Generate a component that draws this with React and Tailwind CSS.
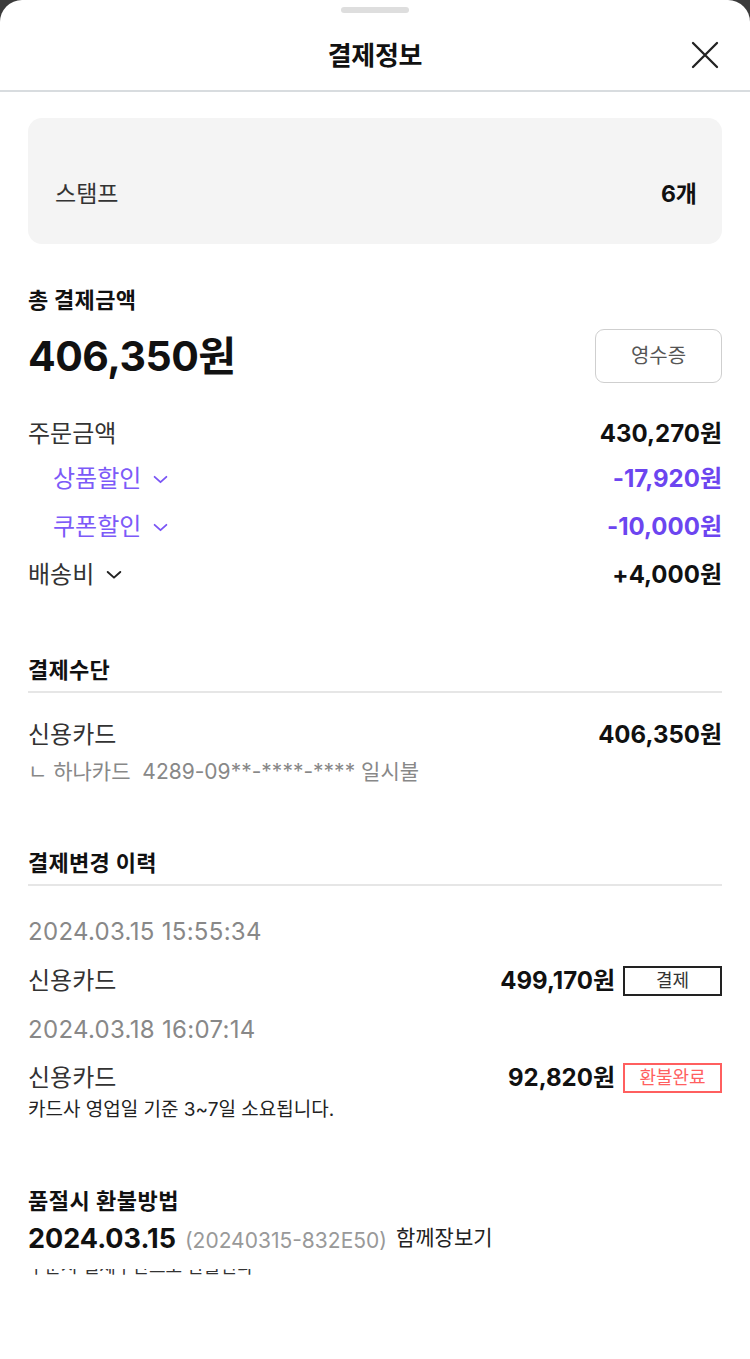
import React from "react";

const font = { fontFamily: 'Inter, "Noto Sans CJK KR", "Noto Sans", sans-serif' };

function Chevron({ color = "#7a55f5", w = 15 }) {
  return (
    <svg width={w} height={w * 0.6} viewBox="0 0 14 8" fill="none" className="shrink-0">
      <path d="M1.5 1.5 L7 6.5 L12.5 1.5" stroke={color} strokeWidth="1.7" strokeLinecap="round" strokeLinejoin="round" />
    </svg>
  );
}

function Row({ left, right, className = "" }) {
  return (
    <div className={"flex items-center justify-between h-[30px] leading-[30px] " + className}>
      {left}
      {right}
    </div>
  );
}

export default function App() {
  return (
    <div className="w-[750px] h-[1359px] bg-[#3b3b3b] overflow-hidden" style={font}>
      <div className="w-full h-full bg-white rounded-t-[22px] flex flex-col">
        {/* handle */}
        <div className="pt-[7px]">
          <div className="mx-auto w-[68px] h-[6px] rounded-full bg-[#dedede]" />
        </div>
        {/* header */}
        <div className="relative h-[79px] pt-[8px] flex items-center justify-center border-b-2 border-[#d8dcdf]">
          <span className="text-[26px] font-bold text-[#111] tracking-[-0.3px] leading-[34px]">결제정보</span>
          <svg className="absolute right-[31px] top-[28px]" width="28" height="28" viewBox="0 0 28 28" fill="none">
            <path d="M2 2 L26 26 M26 2 L2 26" stroke="#222" strokeWidth="2.3" strokeLinecap="round" />
          </svg>
        </div>

        <div className="px-[28px] flex flex-col">
          {/* stamp card */}
          <div className="mt-[26px] h-[126px] rounded-[14px] bg-[#f4f4f4] flex items-end justify-between pl-[27px] pr-[25px] pb-[36px]">
            <span className="text-[23px] text-[#333] leading-[28px]">스탬프</span>
            <span className="text-[23px] font-bold text-[#111] leading-[28px]">6개</span>
          </div>

          {/* total */}
          <div className="mt-[42px] text-[22px] font-bold text-[#111] leading-[28px] tracking-[0.3px]">총 결제금액</div>
          <div className="mt-[15px] flex items-center justify-between">
            <span className="text-[41px] font-bold text-[#111] tracking-[-0.5px] leading-[46px]">406,350원</span>
            <button className="w-[127px] h-[54px] rounded-[9px] border border-[#cfcfcf] text-[20px] text-[#555] bg-white">영수증</button>
          </div>

          <Row
            className="mt-[36px]"
            left={<span className="text-[24px] text-[#333]">주문금액</span>}
            right={<span className="text-[24px] font-bold text-[#111]">430,270원</span>}
          />
          <Row
            className="mt-[15px]"
            left={
              <span className="flex items-center gap-[12px] pl-[25px]">
                <span className="text-[24px] text-[#7c5af8]">상품할인</span>
                <Chevron />
              </span>
            }
            right={<span className="text-[24px] font-bold text-[#6c45f0]">-17,920원</span>}
          />
          <Row
            className="mt-[18px]"
            left={
              <span className="flex items-center gap-[12px] pl-[25px]">
                <span className="text-[24px] text-[#7c5af8]">쿠폰할인</span>
                <Chevron />
              </span>
            }
            right={<span className="text-[24px] font-bold text-[#6c45f0]">-10,000원</span>}
          />
          <Row
            className="mt-[18px]"
            left={
              <span className="flex items-center gap-[12px]">
                <span className="text-[24px] text-[#333]">배송비</span>
                <Chevron color="#222" w={16} />
              </span>
            }
            right={<span className="text-[24px] font-bold text-[#111]">+4,000원</span>}
          />

          {/* payment method */}
          <div className="mt-[66px] pb-[7px] border-b-2 border-[#e6e6e6] text-[22px] font-bold text-[#111] leading-[28px] tracking-[0.3px]">결제수단</div>
          <Row
            className="mt-[27px]"
            left={<span className="text-[24px] text-[#333]">신용카드</span>}
            right={<span className="text-[24px] font-bold text-[#111]">406,350원</span>}
          />
          <div className="mt-[9px] text-[21px] text-[#888] leading-[26px] whitespace-nowrap">ㄴ 하나카드&nbsp; 4289-09**-****-**** 일시불</div>

          {/* history */}
          <div className="mt-[64px] pb-[7px] border-b-2 border-[#e6e6e6] text-[22px] font-bold text-[#111] leading-[28px] tracking-[0.3px]">결제변경 이력</div>
          <div className="mt-[31px] text-[24px] text-[#888] leading-[30px] tracking-[0.3px]">2024.03.15 15:55:34</div>
          <div className="mt-[19px] flex items-center justify-between h-[30px] leading-[30px]">
            <span className="text-[24px] text-[#333]">신용카드</span>
            <span className="flex items-center gap-[8px]">
              <span className="text-[24px] font-bold text-[#111]">499,170원</span>
              <span className="w-[99px] h-[30px] border-2 border-[#222] flex items-center justify-center text-[18px] text-[#333]">결제</span>
            </span>
          </div>
          <div className="mt-[19px] text-[24px] text-[#888] leading-[30px] tracking-[0.3px]">2024.03.18 16:07:14</div>
          <div className="mt-[18px] flex items-center justify-between h-[30px] leading-[30px]">
            <span className="text-[24px] text-[#333]">신용카드</span>
            <span className="flex items-center gap-[8px]">
              <span className="text-[24px] font-bold text-[#111]">92,820원</span>
              <span className="w-[99px] h-[30px] border-2 border-[#ff5f5f] flex items-center justify-center text-[18px] text-[#ff5f5f]">환불완료</span>
            </span>
          </div>
          <div className="mt-[6px] text-[19px] text-[#222] leading-[22px]">카드사 영업일 기준 3~7일 소요됩니다.</div>

          {/* refund */}
          <div className="mt-[66px] text-[22px] font-bold text-[#111] leading-[28px] tracking-[0.5px]">품절시 환불방법</div>
          <div className="mt-[8px] flex items-baseline gap-[9px] leading-[32px] whitespace-nowrap">
            <span className="text-[27px] font-bold text-[#111]">2024.03.15</span>
            <span className="text-[21px] text-[#999]">(20240315-832E50)</span>
            <span className="text-[21px] text-[#222] relative -top-[3px]">함께장보기</span>
          </div>
          <div className="mt-[12px] h-[11px] overflow-hidden flex items-end">
            <span className="text-[18px] text-[#333] leading-[26px] whitespace-nowrap">주문시 결제수단으로 환불된다</span>
          </div>
        </div>
      </div>
    </div>
  );
}
